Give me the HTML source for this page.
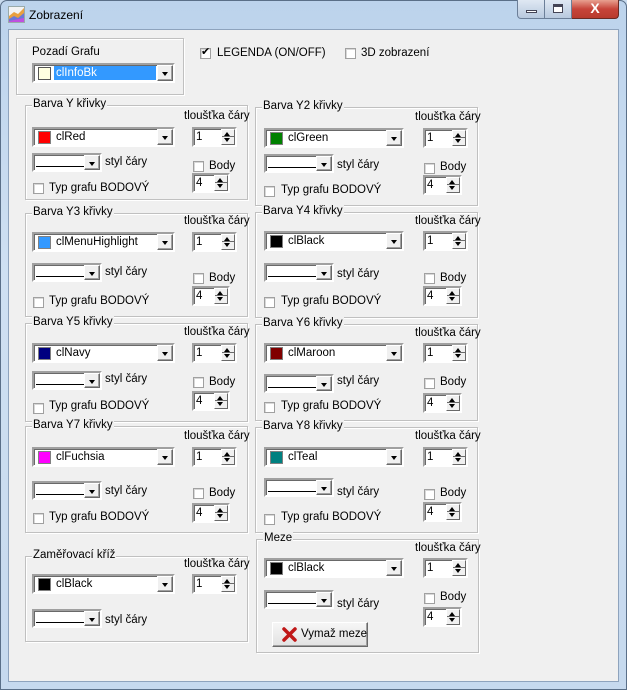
<!DOCTYPE html>
<html><head><meta charset="utf-8"><style>
*{margin:0;padding:0;box-sizing:border-box}
body{width:627px;height:690px;overflow:hidden;background:#c9dbee;font-family:"Liberation Sans",Tahoma,sans-serif;font-size:11.5px;color:#000;position:relative}
.frame{position:absolute;left:0;top:0;width:627px;height:690px;background:linear-gradient(180deg,#bcd3ec 0%,#cfe0f2 40%,#c6d9ee 100%);border:1px solid #5a6f88;border-radius:7px 7px 0 0}
.client{position:absolute;left:8px;top:29px;width:611px;height:653px;background:#f0f0f0;border:1px solid #8ea3bd}
.a{position:absolute}
.g{position:absolute;border:1px solid #c0c0c0;box-shadow:inset 1px 1px 0 #fff, 1px 1px 0 #fff}
.gl{position:absolute;left:6px;top:-8px;background:#f0f0f0;padding:0 1px;white-space:nowrap}
.cb{position:absolute;height:20px;background:#fff;border:2px solid;border-color:#a0a0a0 #fff #fff #a0a0a0;box-shadow:inset 1px 1px 0 #696969}
.cb .dd{position:absolute;right:0;top:0;width:16px;height:16px;background:#f0f0f0;border:1px solid;border-color:#fff #696969 #696969 #fff;box-shadow:inset -1px -1px 0 #a0a0a0}
.cb .dd:after{content:"";position:absolute;left:4px;top:6px;border-left:3.5px solid transparent;border-right:3.5px solid transparent;border-top:4px solid #000}
.sw{position:absolute;left:4px;top:2px;width:13px;height:13px;border:1px solid #808080}
.ct{position:absolute;left:22px;top:0;line-height:16px;white-space:nowrap}
.ln{position:absolute;left:2px;top:11px;width:48px;height:1px;background:#000}
.sp{position:absolute;height:20px;background:#fff;border:2px solid;border-color:#a0a0a0 #fff #fff #a0a0a0;box-shadow:inset 1px 1px 0 #696969}
.sp .v{position:absolute;left:2px;top:0;line-height:16px}
.sp .ud{position:absolute;right:0;top:0;width:14px;height:16px;background:#f0f0f0;border:1px solid;border-color:#fff #696969 #696969 #fff}
.sp .ud:before{content:"";position:absolute;left:2px;top:2px;border-left:3.5px solid transparent;border-right:3.5px solid transparent;border-bottom:4px solid #000}
.sp .ud:after{content:"";position:absolute;left:2px;top:8px;border-left:3.5px solid transparent;border-right:3.5px solid transparent;border-top:4px solid #000}
.sp .ud i{position:absolute;left:0;top:6px;width:12px;height:1px;background:#696969}
.ck{position:absolute;width:11px;height:11px;background:#fff;border:1px solid #a0a0a0;box-shadow:inset 1px 1px 0 #d8d8d8}
.t{position:absolute;white-space:nowrap}
</style></head><body>
<div class="frame"></div>
<svg class="a" style="left:8px;top:6px" width="17" height="17" viewBox="0 0 17 17"><rect x="0.5" y="0.5" width="16" height="16" fill="#f3f3f3" stroke="#9aa"/><path d="M1 16 L1 10 L6 6 L10 8 L16 2 L16 16Z" fill="#e9a040"/><path d="M1 16 L1 13 L6 10 L10 12 L16 7 L16 16Z" fill="#6a78d8"/><path d="M1 16 L1 15 L16 12 L16 16Z" fill="#c050e0"/></svg>
<div class="t" style="left:29px;top:8px;font-size:12px">Zobrazení</div>
<div class="a" style="left:517px;top:0;width:28px;height:19px;background:linear-gradient(#dfe8f3,#b8c9de);border:1px solid #6c7f98;border-top:none;border-radius:0 0 0 4px"><div class="a" style="left:8px;top:10px;width:11px;height:3px;background:#fff;border:1px solid #445"></div></div>
<div class="a" style="left:545px;top:0;width:27px;height:19px;background:linear-gradient(#dfe8f3,#b8c9de);border:1px solid #6c7f98;border-top:none;border-left:none"><div class="a" style="left:8px;top:4px;width:10px;height:9px;border:1px solid #445;background:#fff;box-shadow:inset 0 2px 0 #445"></div></div>
<div class="a" style="left:572px;top:0;width:47px;height:19px;background:linear-gradient(#e8a090,#c7443a 50%,#b83a2e);border:1px solid #6a2a24;border-top:none;border-left:none;border-radius:0 0 4px 0;color:#fff;font-weight:bold;font-size:14px;text-align:center;line-height:17px">X</div>
<div class="client"></div>

<div class="g" style="left:16px;top:38px;width:168px;height:57px"></div>
<div class="t" style="left:32px;top:46px">Pozadí Grafu</div>
<div class="cb" style="left:32px;top:63px;width:143px;height:20px"><div class="sw" style="background:#ffffe1;border-color:#555"></div><div class="a" style="left:20px;top:1px;width:102px;height:14px;background:#3399ff;color:#fff;padding-left:2px;line-height:14px">clInfoBk</div><div class="dd"></div></div>
<div class="ck" style="left:200px;top:48px"></div><div class="t" style="left:201px;top:45px;font-size:11px">✔</div>
<div class="t" style="left:217px;top:47px">LEGENDA (ON/OFF)</div>
<div class="ck" style="left:345px;top:48px"></div>
<div class="t" style="left:361px;top:47px">3D zobrazení</div>

<div class="g" style="left:25px;top:105px;width:223px;height:95px"><div class="gl">Barva Y křivky</div></div>
<div class="t" style="left:184px;top:110px">tloušťka čáry</div>
<div class="cb" style="left:32px;top:127px;width:143px"><div class="sw" style="background:#f00"></div><div class="ct">clRed</div><div class="dd"></div></div>
<div class="sp" style="left:192px;top:127px;width:45px"><div class="v">1</div><div class="ud"><i></i></div></div>
<div class="cb" style="left:32px;top:153px;width:70px;height:19px"><div class="ln"></div><div class="dd" style="height:15px"></div></div>
<div class="t" style="left:105px;top:156px">styl čáry</div>
<div class="ck" style="left:193px;top:161px"></div><div class="t" style="left:209px;top:160px">Body</div>
<div class="sp" style="left:192px;top:173px;width:38px"><div class="v">4</div><div class="ud"><i></i></div></div>
<div class="ck" style="left:33px;top:183px"></div><div class="t" style="left:49px;top:182px">Typ grafu BODOVÝ</div>

<div class="g" style="left:25px;top:213px;width:223px;height:104px"><div class="gl">Barva Y3 křivky</div></div>
<div class="t" style="left:184px;top:215px">tloušťka čáry</div>
<div class="cb" style="left:32px;top:232px;width:143px"><div class="sw" style="background:#3399ff"></div><div class="ct">clMenuHighlight</div><div class="dd"></div></div>
<div class="sp" style="left:192px;top:232px;width:45px"><div class="v">1</div><div class="ud"><i></i></div></div>
<div class="cb" style="left:32px;top:263px;width:70px;height:19px"><div class="ln"></div><div class="dd" style="height:15px"></div></div>
<div class="t" style="left:105px;top:266px">styl čáry</div>
<div class="ck" style="left:193px;top:273px"></div><div class="t" style="left:209px;top:272px">Body</div>
<div class="sp" style="left:192px;top:286px;width:38px"><div class="v">4</div><div class="ud"><i></i></div></div>
<div class="ck" style="left:33px;top:297px"></div><div class="t" style="left:49px;top:295px">Typ grafu BODOVÝ</div>

<div class="g" style="left:25px;top:323px;width:223px;height:99px"><div class="gl">Barva Y5 křivky</div></div>
<div class="t" style="left:184px;top:326px">tloušťka čáry</div>
<div class="cb" style="left:32px;top:343px;width:143px"><div class="sw" style="background:#000080"></div><div class="ct">clNavy</div><div class="dd"></div></div>
<div class="sp" style="left:192px;top:343px;width:45px"><div class="v">1</div><div class="ud"><i></i></div></div>
<div class="cb" style="left:32px;top:371px;width:70px;height:19px"><div class="ln"></div><div class="dd" style="height:15px"></div></div>
<div class="t" style="left:105px;top:373px">styl čáry</div>
<div class="ck" style="left:193px;top:377px"></div><div class="t" style="left:209px;top:376px">Body</div>
<div class="sp" style="left:192px;top:391px;width:38px"><div class="v">4</div><div class="ud"><i></i></div></div>
<div class="ck" style="left:33px;top:403px"></div><div class="t" style="left:49px;top:400px">Typ grafu BODOVÝ</div>

<div class="g" style="left:25px;top:426px;width:223px;height:107px"><div class="gl">Barva Y7 křivky</div></div>
<div class="t" style="left:184px;top:430px">tloušťka čáry</div>
<div class="cb" style="left:32px;top:447px;width:143px"><div class="sw" style="background:#f0f"></div><div class="ct">clFuchsia</div><div class="dd"></div></div>
<div class="sp" style="left:192px;top:447px;width:45px"><div class="v">1</div><div class="ud"><i></i></div></div>
<div class="cb" style="left:32px;top:481px;width:70px;height:19px"><div class="ln"></div><div class="dd" style="height:15px"></div></div>
<div class="t" style="left:105px;top:485px">styl čáry</div>
<div class="ck" style="left:193px;top:488px"></div><div class="t" style="left:209px;top:487px">Body</div>
<div class="sp" style="left:192px;top:503px;width:38px"><div class="v">4</div><div class="ud"><i></i></div></div>
<div class="ck" style="left:33px;top:513px"></div><div class="t" style="left:49px;top:511px">Typ grafu BODOVÝ</div>

<div class="g" style="left:25px;top:556px;width:223px;height:86px"><div class="gl">Zaměřovací kříž</div></div>
<div class="t" style="left:184px;top:558px">tloušťka čáry</div>
<div class="cb" style="left:32px;top:574px;width:143px"><div class="sw" style="background:#000"></div><div class="ct">clBlack</div><div class="dd"></div></div>
<div class="sp" style="left:192px;top:574px;width:45px"><div class="v">1</div><div class="ud"><i></i></div></div>
<div class="cb" style="left:32px;top:609px;width:70px;height:19px"><div class="ln"></div><div class="dd" style="height:15px"></div></div>
<div class="t" style="left:105px;top:614px">styl čáry</div>

<div class="g" style="left:255px;top:107px;width:223px;height:99px"><div class="gl">Barva Y2 křivky</div></div>
<div class="t" style="left:415px;top:111px">tloušťka čáry</div>
<div class="cb" style="left:264px;top:128px;width:140px"><div class="sw" style="background:#008000"></div><div class="ct">clGreen</div><div class="dd"></div></div>
<div class="sp" style="left:423px;top:128px;width:45px"><div class="v">1</div><div class="ud"><i></i></div></div>
<div class="cb" style="left:264px;top:154px;width:70px;height:19px"><div class="ln"></div><div class="dd" style="height:15px"></div></div>
<div class="t" style="left:337px;top:159px">styl čáry</div>
<div class="ck" style="left:424px;top:163px"></div><div class="t" style="left:440px;top:161px">Body</div>
<div class="sp" style="left:423px;top:175px;width:39px"><div class="v">4</div><div class="ud"><i></i></div></div>
<div class="ck" style="left:264px;top:186px"></div><div class="t" style="left:281px;top:184px">Typ grafu BODOVÝ</div>

<div class="g" style="left:255px;top:212px;width:223px;height:106px"><div class="gl">Barva Y4 křivky</div></div>
<div class="t" style="left:415px;top:215px">tloušťka čáry</div>
<div class="cb" style="left:264px;top:231px;width:140px"><div class="sw" style="background:#000"></div><div class="ct">clBlack</div><div class="dd"></div></div>
<div class="sp" style="left:423px;top:231px;width:45px"><div class="v">1</div><div class="ud"><i></i></div></div>
<div class="cb" style="left:264px;top:263px;width:70px;height:19px"><div class="ln"></div><div class="dd" style="height:15px"></div></div>
<div class="t" style="left:337px;top:268px">styl čáry</div>
<div class="ck" style="left:424px;top:273px"></div><div class="t" style="left:440px;top:272px">Body</div>
<div class="sp" style="left:423px;top:286px;width:39px"><div class="v">4</div><div class="ud"><i></i></div></div>
<div class="ck" style="left:264px;top:297px"></div><div class="t" style="left:281px;top:295px">Typ grafu BODOVÝ</div>

<div class="g" style="left:255px;top:324px;width:223px;height:97px"><div class="gl">Barva Y6 křivky</div></div>
<div class="t" style="left:415px;top:327px">tloušťka čáry</div>
<div class="cb" style="left:264px;top:343px;width:140px"><div class="sw" style="background:#800000"></div><div class="ct">clMaroon</div><div class="dd"></div></div>
<div class="sp" style="left:423px;top:343px;width:45px"><div class="v">1</div><div class="ud"><i></i></div></div>
<div class="cb" style="left:264px;top:374px;width:70px;height:19px"><div class="ln"></div><div class="dd" style="height:15px"></div></div>
<div class="t" style="left:337px;top:375px">styl čáry</div>
<div class="ck" style="left:424px;top:378px"></div><div class="t" style="left:440px;top:376px">Body</div>
<div class="sp" style="left:423px;top:393px;width:39px"><div class="v">4</div><div class="ud"><i></i></div></div>
<div class="ck" style="left:264px;top:402px"></div><div class="t" style="left:281px;top:400px">Typ grafu BODOVÝ</div>

<div class="g" style="left:255px;top:427px;width:223px;height:106px"><div class="gl">Barva Y8 křivky</div></div>
<div class="t" style="left:415px;top:430px">tloušťka čáry</div>
<div class="cb" style="left:264px;top:447px;width:140px"><div class="sw" style="background:#008080"></div><div class="ct">clTeal</div><div class="dd"></div></div>
<div class="sp" style="left:423px;top:447px;width:45px"><div class="v">1</div><div class="ud"><i></i></div></div>
<div class="cb" style="left:264px;top:478px;width:70px;height:19px"><div class="ln"></div><div class="dd" style="height:15px"></div></div>
<div class="t" style="left:337px;top:486px">styl čáry</div>
<div class="ck" style="left:424px;top:489px"></div><div class="t" style="left:440px;top:487px">Body</div>
<div class="sp" style="left:423px;top:502px;width:39px"><div class="v">4</div><div class="ud"><i></i></div></div>
<div class="ck" style="left:264px;top:514px"></div><div class="t" style="left:281px;top:511px">Typ grafu BODOVÝ</div>

<div class="g" style="left:256px;top:539px;width:223px;height:114px"><div class="gl">Meze</div></div>
<div class="t" style="left:415px;top:542px">tloušťka čáry</div>
<div class="cb" style="left:264px;top:558px;width:140px"><div class="sw" style="background:#000"></div><div class="ct">clBlack</div><div class="dd"></div></div>
<div class="sp" style="left:423px;top:558px;width:45px"><div class="v">1</div><div class="ud"><i></i></div></div>
<div class="cb" style="left:264px;top:590px;width:70px;height:19px"><div class="ln"></div><div class="dd" style="height:15px"></div></div>
<div class="t" style="left:337px;top:598px">styl čáry</div>
<div class="ck" style="left:424px;top:593px"></div><div class="t" style="left:440px;top:591px">Body</div>
<div class="sp" style="left:423px;top:607px;width:39px"><div class="v">4</div><div class="ud"><i></i></div></div>
<div class="a" style="left:272px;top:622px;width:96px;height:25px;background:linear-gradient(#f6f6f6,#e2e2e2);border:1px solid;border-color:#fff #696969 #696969 #fff;box-shadow:inset -1px -1px 0 #a0a0a0"></div>
<svg class="a" style="left:282px;top:627px" width="15" height="15" viewBox="0 0 15 15"><path d="M2 2 L13 13 M13 2 L2 13" stroke="#c01818" stroke-width="3.5" stroke-linecap="round"/></svg>
<div class="t" style="left:301px;top:628px">Vymaž meze</div>
</body></html>
